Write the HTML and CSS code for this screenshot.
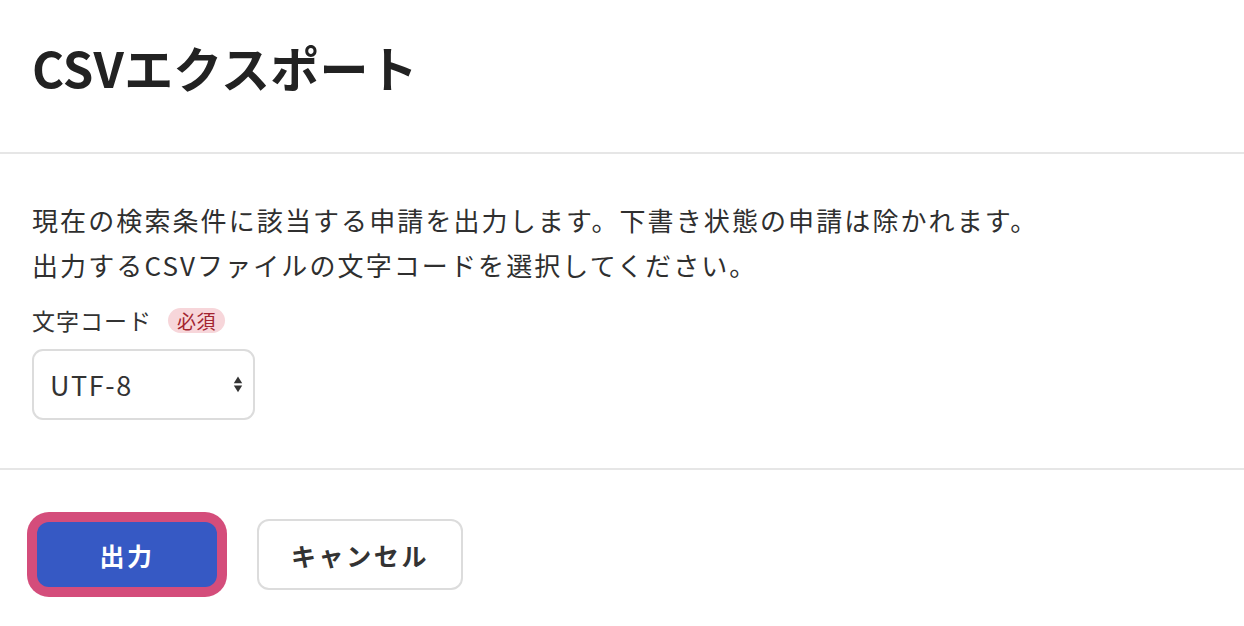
FILE: index.html
```html
<!DOCTYPE html>
<html lang="ja">
<head>
<meta charset="utf-8">
<title>CSVエクスポート</title>
<link rel="stylesheet" href="styles.css">
</head>
<body>
<div class="dialog">
  <header class="dialog-header">
    <h1 class="dialog-title">CSVエクスポート</h1>
  </header>
  <section class="dialog-body">
    <p class="description">現在の検索条件に該当する申請を出力します。下書き状態の申請は除かれます。<br>出力するCSVファイルの文字コードを選択してください。</p>
    <div class="field-label">
      <span class="label-text">文字コード</span>
      <span class="badge">必須</span>
    </div>
    <div class="select-wrap">
      <select class="select">
        <option>UTF-8</option>
        <option>Shift_JIS</option>
      </select>
      <svg class="select-arrows" width="10" height="17" viewBox="0 0 10 17" aria-hidden="true">
        <path d="M5 0.5 L9.2 7.2 L0.8 7.2 Z" fill="#333"/>
        <path d="M0.8 9.6 L9.2 9.6 L5 16.3 Z" fill="#333"/>
      </svg>
    </div>
  </section>
  <footer class="dialog-footer">
    <button class="btn btn-primary">出力</button>
    <button class="btn btn-secondary">キャンセル</button>
  </footer>
</div>
</body>
</html>
```

FILE: styles.css
```css
* {
  box-sizing: border-box;
}

html, body {
  margin: 0;
  padding: 0;
  background: #ffffff;
}

body {
  font-family: "Noto Sans CJK JP", "Noto Sans", sans-serif;
  color: #333333;
}

.dialog {
  width: 1244px;
}

.dialog-header {
  padding: 23px 32px 41px;
  border-bottom: 2px solid #e6e6e6;
}

.dialog-title {
  margin: 0;
  font-size: 49px;
  line-height: 88px;
  font-weight: 700;
  color: #222222;
  letter-spacing: 0.2px;
}

.dialog-body {
  padding: 43px 32px 48px;
  border-bottom: 2px solid #e6e6e6;
}

.description {
  margin: 0;
  font-size: 26px;
  line-height: 45px;
  letter-spacing: 2.1px;
  color: #2f2f2f;
}

.field-label {
  display: flex;
  align-items: center;
  gap: 16px;
  margin-top: 17px;
  height: 32px;
}

.label-text {
  font-size: 23px;
  letter-spacing: 1px;
  color: #333333;
}

.badge {
  display: inline-flex;
  align-items: center;
  justify-content: center;
  width: 57px;
  height: 25px;
  border-radius: 13px;
  background: #f7d6da;
  color: #a3232f;
  font-size: 19px;
  letter-spacing: 0.5px;
}

.select-wrap {
  position: relative;
  width: 223px;
  margin-top: 13px;
}

.select {
  appearance: none;
  -webkit-appearance: none;
  width: 223px;
  height: 71px;
  padding: 0 40px 0 16px;
  border: 2px solid #dcdcdc;
  border-radius: 11px;
  background: #ffffff;
  font-family: "Noto Sans CJK JP", "Noto Sans", sans-serif;
  font-size: 27px;
  letter-spacing: 1.6px;
  color: #333333;
}

.select-arrows {
  position: absolute;
  right: 12px;
  top: 27px;
}

.dialog-footer {
  display: flex;
  align-items: center;
  gap: 40px;
  padding: 49px 37px;
}

.btn {
  font-family: "Noto Sans CJK JP", "Noto Sans", sans-serif;
  font-size: 25px;
  font-weight: 700;
  letter-spacing: 2.6px;
  cursor: pointer;
}

.btn-primary {
  width: 180px;
  height: 65px;
  border: none;
  border-radius: 12px;
  background: #3659c4;
  color: #ffffff;
  box-shadow: 0 0 0 10px #d44d7b;
}

.btn-secondary {
  width: 206px;
  height: 71px;
  border: 2px solid #dcdcdc;
  border-radius: 12px;
  background: #ffffff;
  color: #333333;
}
```
